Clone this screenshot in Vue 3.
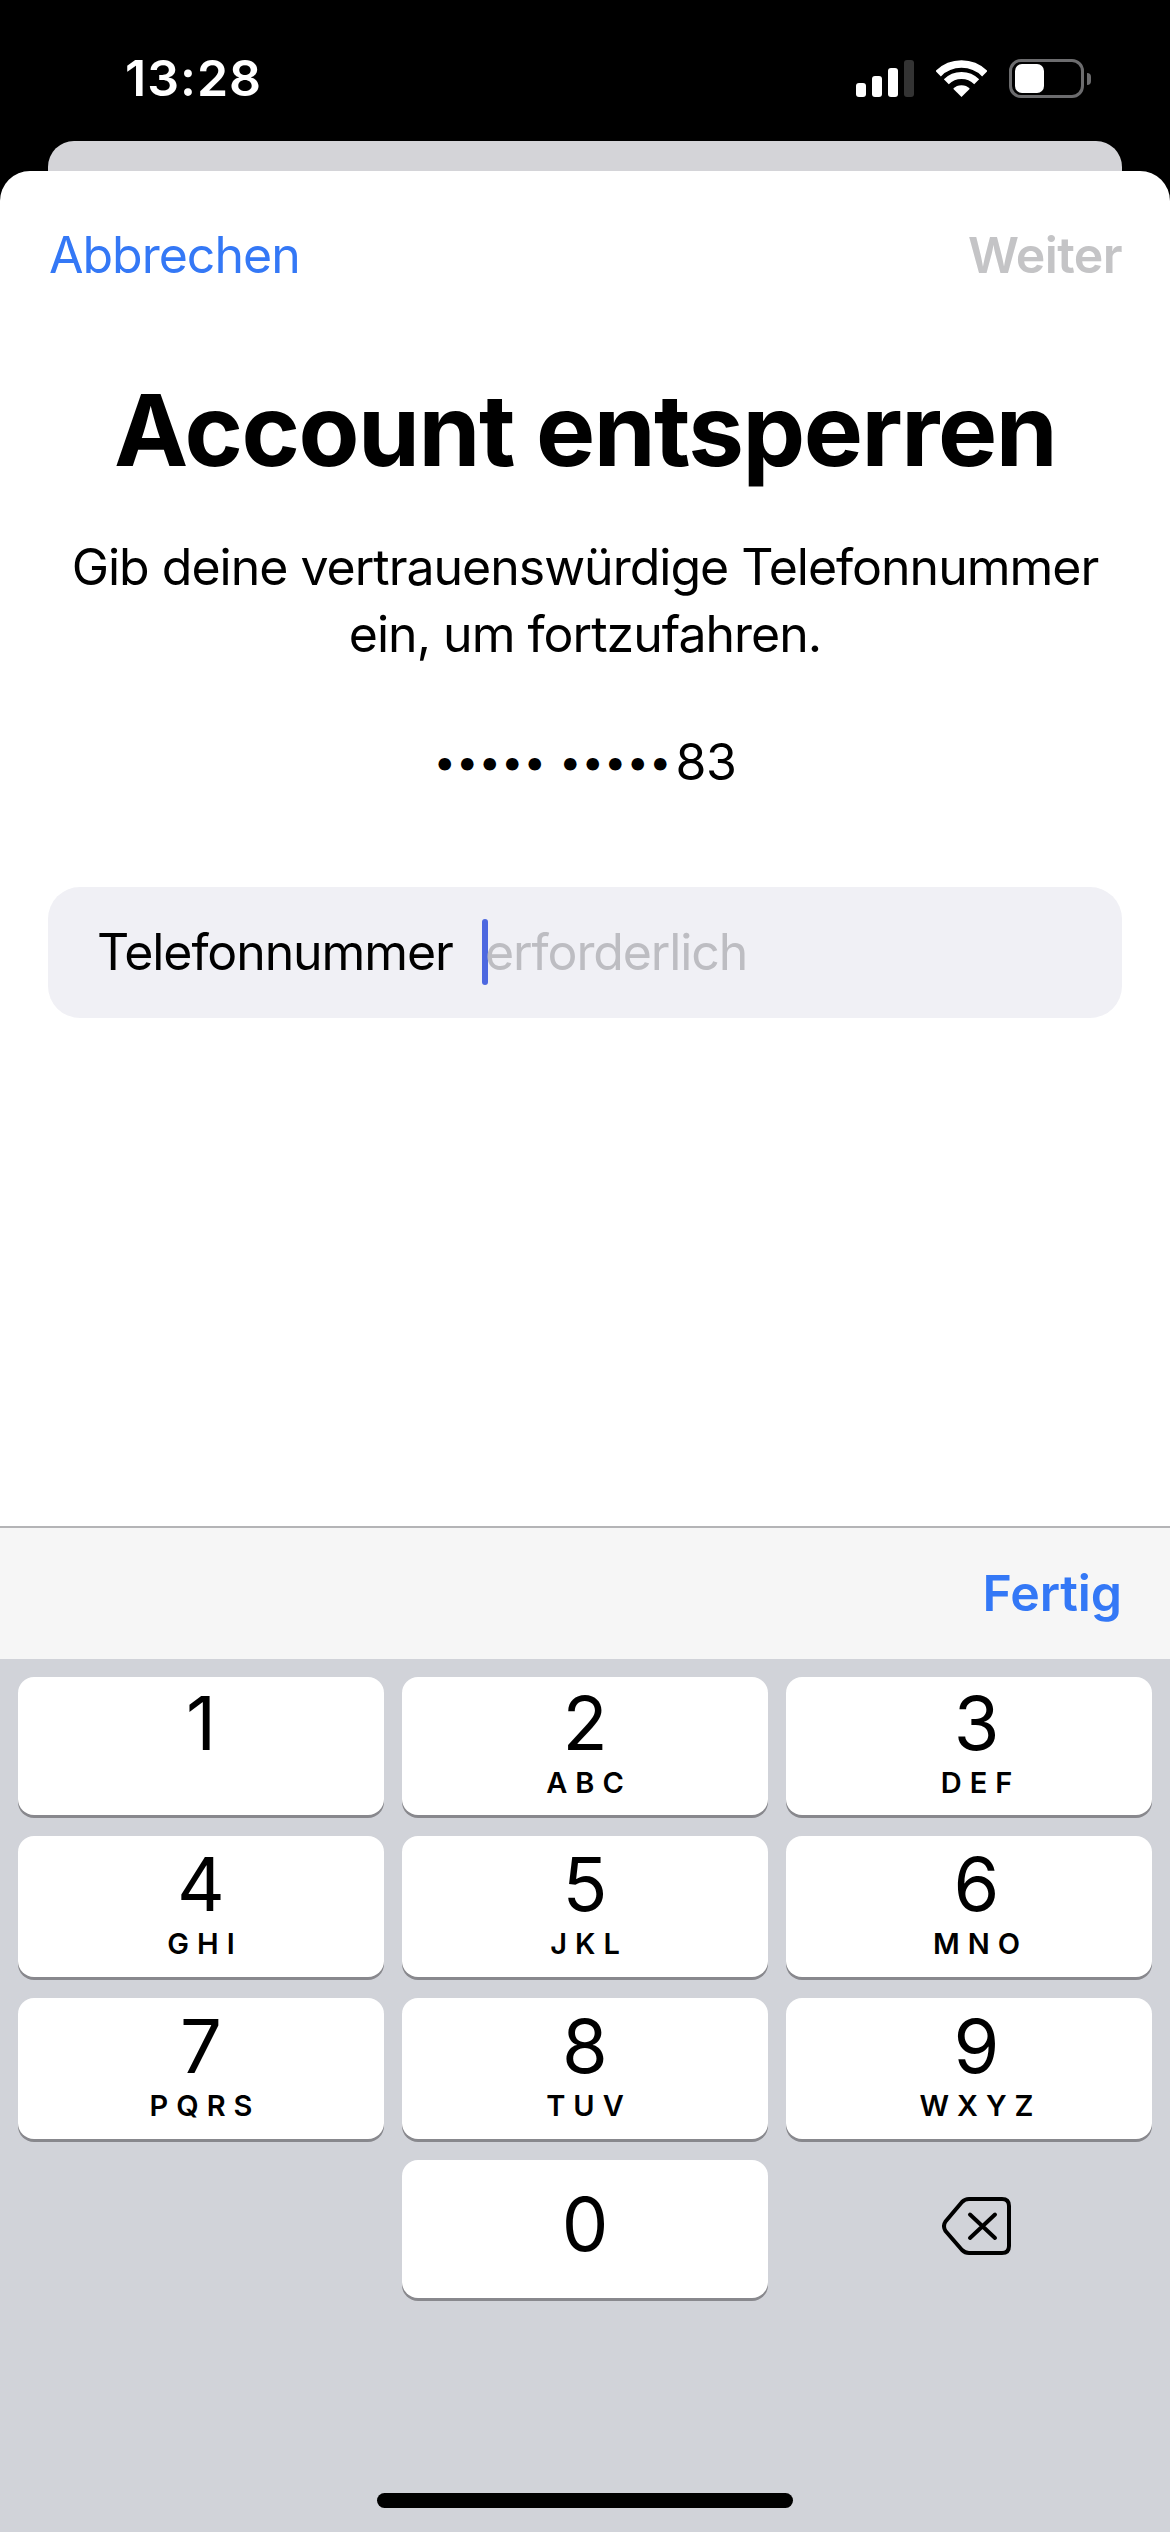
<template>
  <div class="screen">
    <!-- status bar -->
    <div class="status-bar">
      <span class="time">13:28</span>
      <div class="status-icons">
        <div class="signal">
          <span class="bar bar-1"></span>
          <span class="bar bar-2"></span>
          <span class="bar bar-3"></span>
          <span class="bar bar-4"></span>
        </div>
        <svg class="wifi" width="51" height="37" viewBox="0 0 51 37">
          <path d="M2.2 13.7A33 33 0 0 1 48.8 13.7" fill="none" stroke="#fff" stroke-width="7.6" />
          <path d="M10.3 21.8A21.5 21.5 0 0 1 40.7 21.8" fill="none" stroke="#fff" stroke-width="7" />
          <path d="M25.5 37L17.2 28.7A11.7 11.7 0 0 1 33.8 28.7Z" fill="#fff" />
        </svg>
        <div class="battery">
          <div class="battery-body"><span class="battery-fill"></span></div>
          <span class="battery-nub"></span>
        </div>
      </div>
    </div>

    <div class="sheet-behind"></div>

    <div class="sheet">
      <div class="nav">
        <span class="nav-cancel">Abbrechen</span>
        <span class="nav-next">Weiter</span>
      </div>

      <h1 class="title">Account entsperren</h1>
      <p class="subtitle">Gib deine vertrauenswürdige Telefonnummer<br>ein, um fortzufahren.</p>
      <p class="masked">
        <span class="dots">•••••</span>
        <span class="dots dots-second">•••••</span>
        <span class="masked-end">83</span>
      </p>

      <div class="field">
        <span class="field-label">Telefonnummer</span>
        <span class="caret"></span>
        <span class="field-placeholder">erforderlich</span>
      </div>

      <div class="spacer"></div>

      <div class="toolbar">
        <span class="done">Fertig</span>
      </div>

      <div class="keyboard">
        <div class="keys">
          <div
            v-for="k in keys"
            :key="k.digit"
            class="key"
          >
            <span class="digit">{{ k.digit }}</span>
            <span v-if="k.letters" class="letters">{{ k.letters }}</span>
          </div>
          <div class="key-blank"></div>
          <div class="key key-zero"><span class="digit">0</span></div>
          <div class="key-delete">
            <svg width="69" height="58" viewBox="0 0 69 58" fill="none" stroke="#000" stroke-linejoin="round" stroke-linecap="round">
              <path d="M27 2H60Q67 2 67 9V49Q67 56 60 56H27Q23 56 20 53L3.500 34Q0.500 29 3.500 24.500L20 5Q23 2 27 2Z" stroke-width="4" />
              <path d="M28 17.500L53 41M53 17.500L28 41" stroke-width="4" />
            </svg>
          </div>
        </div>
        <div class="home-indicator"></div>
      </div>
    </div>
  </div>
</template>

<script setup>
const keys = [
  { digit: '1', letters: '' },
  { digit: '2', letters: 'ABC' },
  { digit: '3', letters: 'DEF' },
  { digit: '4', letters: 'GHI' },
  { digit: '5', letters: 'JKL' },
  { digit: '6', letters: 'MNO' },
  { digit: '7', letters: 'PQRS' },
  { digit: '8', letters: 'TUV' },
  { digit: '9', letters: 'WXYZ' },
]
</script>

<style>
html,
body {
  margin: 0;
  background: #000;
}
</style>

<style scoped>
.screen {
  width: 1170px;
  height: 2532px;
  display: flex;
  flex-direction: column;
  overflow: hidden;
  background: #000;
  font-family: Inter, 'Liberation Sans', sans-serif;
  color: #000;
}

/* status bar */
.status-bar {
  height: 141px;
  flex-shrink: 0;
  box-sizing: border-box;
  padding: 50px 79px 0 125px;
  display: flex;
  justify-content: space-between;
  align-items: flex-start;
}

.time {
  color: #fff;
  font-size: 50px;
  font-weight: 600;
  line-height: 56px;
  letter-spacing: 1px;
}

.status-icons {
  display: flex;
  align-items: flex-end;
  margin-top: 9px;
}

.signal {
  display: flex;
  align-items: flex-end;
  gap: 6px;
  height: 37px;
  margin-right: 22px;
}

.bar {
  width: 10px;
  background: #fff;
  border-radius: 3px;
}

.bar-1 { height: 14px; }
.bar-2 { height: 21px; }
.bar-3 { height: 29px; }
.bar-4 { height: 37px; background: #333; }

.wifi {
  display: block;
  margin-right: 22px;
}

.battery {
  display: flex;
  align-items: center;
  margin-bottom: -1px;
}

.battery-body {
  width: 75px;
  height: 39px;
  box-sizing: border-box;
  border: 3px solid #6c6c6e;
  border-radius: 12px;
  padding: 2px 3px;
  display: flex;
}

.battery-fill {
  width: 29px;
  background: #fff;
  border-radius: 7px;
}

.battery-nub {
  width: 4px;
  height: 12px;
  margin-left: 3px;
  background: #6c6c6e;
  border-radius: 0 4px 4px 0;
}

/* sheets */
.sheet-behind {
  height: 30px;
  flex-shrink: 0;
  margin: 0 48px;
  background: #d4d4d8;
  border-radius: 26px 26px 0 0;
}

.sheet {
  flex: 1;
  display: flex;
  flex-direction: column;
  background: #fff;
  border-radius: 30px 30px 0 0;
  overflow: hidden;
}

.nav {
  display: flex;
  justify-content: space-between;
  padding: 54px 48px 0 49px;
  font-size: 50px;
  line-height: 60px;
}

.nav-cancel {
  color: #3478f6;
  letter-spacing: -1px;
}

.nav-next {
  color: #c4c4c6;
  font-weight: 600;
  letter-spacing: -0.6px;
}

.title {
  margin: 85px 0 0;
  text-align: center;
  font-size: 99.500px;
  font-weight: 700;
  line-height: 120px;
  letter-spacing: -1.500px;
}

.subtitle {
  margin: 44px 0 0;
  text-align: center;
  font-size: 50px;
  line-height: 67px;
  letter-spacing: -1px;
}

.masked {
  margin: 64px 0 0;
  text-align: center;
  font-size: 50px;
  line-height: 60px;
  display: flex;
  justify-content: center;
  align-items: center;
}

.dots {
  font-size: 40px;
}

.dots-second {
  margin-left: 13px;
}

.masked-end {
  margin-left: 4px;
  letter-spacing: -0.5px;
}

.field {
  margin: 95px 48px 0;
  height: 131px;
  display: flex;
  align-items: center;
  padding: 0 50px 2px 49px;
  box-sizing: border-box;
  background: #f0f0f5;
  border-radius: 32px;
  font-size: 50px;
  letter-spacing: -1.100px;
}

.field-label {
  width: 385px;
  flex-shrink: 0;
}

.caret {
  width: 6px;
  height: 66px;
  flex-shrink: 0;
  background: #4d68e0;
  border-radius: 3px;
}

.field-placeholder {
  margin-left: -3px;
  color: #bdbdc2;
}

.spacer {
  flex: 1;
}

.toolbar {
  height: 133px;
  flex-shrink: 0;
  box-sizing: border-box;
  border-top: 2px solid #b4b4b6;
  padding: 0 48px 2px;
  display: flex;
  align-items: center;
  justify-content: flex-end;
  background: #f6f6f6;
}

.done {
  color: #3478f6;
  font-size: 50px;
  font-weight: 600;
  letter-spacing: -0.1px;
}

.keyboard {
  height: 873px;
  flex-shrink: 0;
  box-sizing: border-box;
  padding: 18px 18px 24px;
  display: flex;
  flex-direction: column;
  background: #d1d3d9;
}

.keys {
  display: grid;
  grid-template-columns: repeat(3, 366px);
  grid-template-rows: 138px 141px 141px 138px;
  column-gap: 18px;
  row-gap: 21px;
}

.key {
  box-sizing: border-box;
  padding-top: 10px;
  display: flex;
  flex-direction: column;
  align-items: center;
  background: #fff;
  border-radius: 16px;
  box-shadow: 0 3px 0 #88888d;
}

/* the two middle rows are a little taller */
.key:nth-child(n+4) {
  padding-top: 12px;
}

/* right column text sits off centre */
.key:nth-child(3n) {
  padding-left: 15px;
}

.digit {
  font-size: 74px;
  line-height: 72px;
}

.letters {
  margin-top: 7px;
  padding-left: 8px;
  font-size: 29px;
  font-weight: 600;
  line-height: 34px;
  letter-spacing: 8px;
}

.key.key-zero {
  padding-top: 28px;
  padding-left: 0;
}

.key-delete {
  display: flex;
  align-items: center;
  justify-content: center;
  padding: 0 0 6px 15px;
}

.home-indicator {
  width: 416px;
  height: 15px;
  margin-top: auto;
  align-self: center;
  background: #000;
  border-radius: 8px;
}
</style>
